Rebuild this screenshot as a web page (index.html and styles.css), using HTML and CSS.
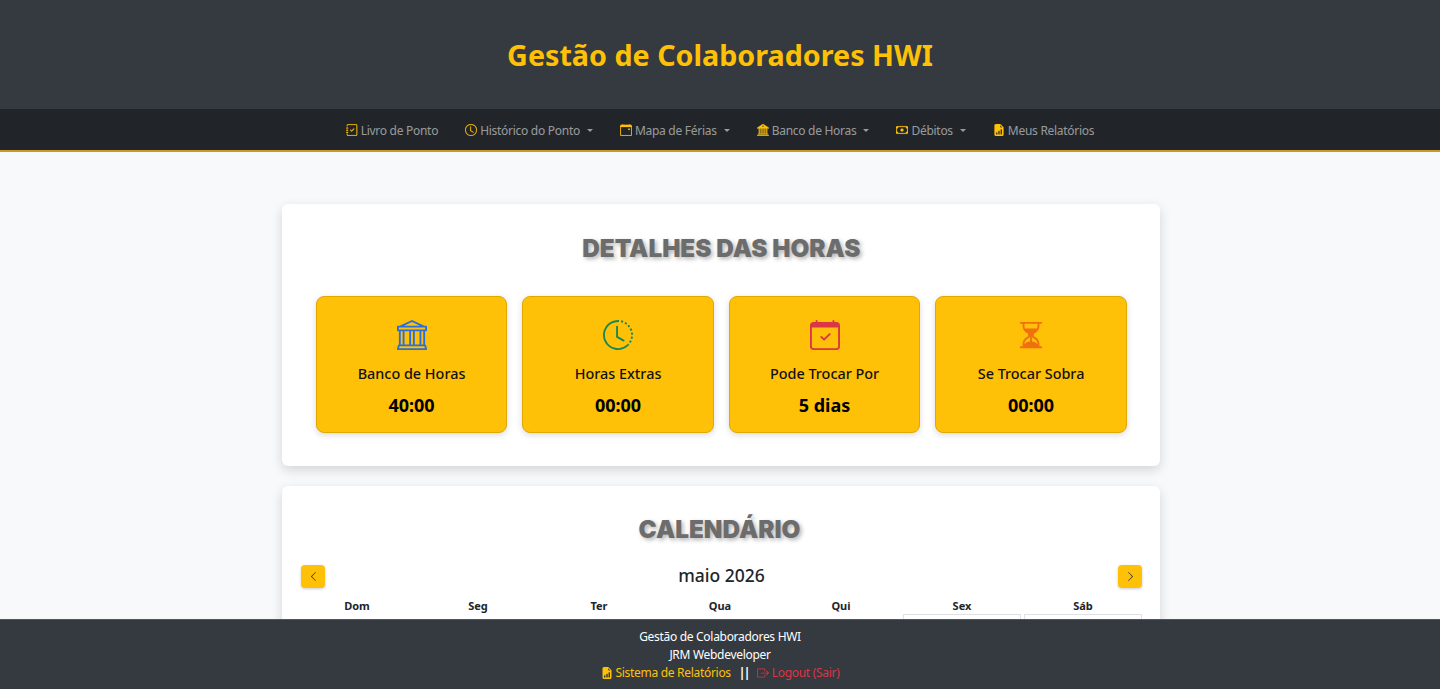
FILE: index.html
```html
<!DOCTYPE html>
<html lang="pt">
<head>
    <meta charset="UTF-8">
    <meta name="viewport" content="width=device-width, initial-scale=1.0">
    <title>Gestão de Colaboradores HWI</title>
    <link rel="stylesheet" href="styles.css">
</head>
<body>
    <svg class="icon-defs" aria-hidden="true">
        <symbol id="i-journal" viewBox="0 0 16 16"><path fill-rule="evenodd" d="M10.854 6.146a.5.5 0 0 1 0 .708l-3 3a.5.5 0 0 1-.708 0l-1.5-1.5a.5.5 0 1 1 .708-.708L7.5 8.793l2.646-2.647a.5.5 0 0 1 .708 0z"/><path d="M3 0h10a2 2 0 0 1 2 2v12a2 2 0 0 1-2 2H3a2 2 0 0 1-2-2v-1h1v1a1 1 0 0 0 1 1h10a1 1 0 0 0 1-1V2a1 1 0 0 0-1-1H3a1 1 0 0 0-1 1v1H1V2a2 2 0 0 1 2-2z"/><path d="M1 5v-.5a.5.5 0 0 1 1 0V5h.5a.5.5 0 0 1 0 1h-2a.5.5 0 0 1 0-1H1zm0 3v-.5a.5.5 0 0 1 1 0V8h.5a.5.5 0 0 1 0 1h-2a.5.5 0 0 1 0-1H1zm0 3v-.5a.5.5 0 0 1 1 0v.5h.5a.5.5 0 0 1 0 1h-2a.5.5 0 0 1 0-1H1z"/></symbol>
        <symbol id="i-clock" viewBox="0 0 16 16"><path d="M8 3.5a.5.5 0 0 0-1 0V9a.5.5 0 0 0 .252.434l3.5 2a.5.5 0 0 0 .496-.868L8 8.71V3.5z"/><path d="M8 16A8 8 0 1 0 8 0a8 8 0 0 0 0 16zm7-8A7 7 0 1 1 1 8a7 7 0 0 1 14 0z"/></symbol>
        <symbol id="i-clock-history" viewBox="0 0 16 16"><path d="M8.515 1.019A7 7 0 0 0 8 1V0a8 8 0 0 1 .589.022l-.074.997zm2.004.45a7.003 7.003 0 0 0-.985-.299l.219-.976c.383.086.76.2 1.126.342l-.36.933zm1.37.71a7.01 7.01 0 0 0-.439-.27l.493-.87a8.025 8.025 0 0 1 .979.654l-.615.789a6.996 6.996 0 0 0-.418-.302zm1.834 1.79a6.99 6.99 0 0 0-.653-.796l.724-.69c.27.285.52.59.747.91l-.818.576zm.744 1.352a7.08 7.08 0 0 0-.214-.468l.893-.45a7.976 7.976 0 0 1 .45 1.088l-.95.313a7.023 7.023 0 0 0-.179-.483zm.53 2.507a6.991 6.991 0 0 0-.1-1.025l.985-.17c.067.386.106.778.116 1.17l-1 .025zm-.131 1.538c.033-.17.06-.339.081-.51l.993.123a7.957 7.957 0 0 1-.23 1.155l-.964-.267c.046-.165.086-.332.12-.501zm-.952 2.379c.184-.29.346-.594.486-.908l.914.405c-.16.36-.345.706-.555 1.038l-.845-.535zm-.964 1.205c.122-.122.239-.248.35-.378l.758.653a8.073 8.073 0 0 1-.401.432l-.707-.707z"/><path d="M8 1a7 7 0 1 0 4.95 11.95l.707.707A8.001 8.001 0 1 1 8 0v1z"/><path d="M7.5 3a.5.5 0 0 1 .5.5v5.21l3.248 1.856a.5.5 0 0 1-.496.868l-3.5-2A.5.5 0 0 1 7 9V3.5a.5.5 0 0 1 .5-.5z"/></symbol>
        <symbol id="i-calendar-event" viewBox="0 0 16 16"><path d="M11 6.5a.5.5 0 0 1 .5-.5h1a.5.5 0 0 1 .5.5v1a.5.5 0 0 1-.5.5h-1a.5.5 0 0 1-.5-.5v-1z"/><path d="M3.5 0a.5.5 0 0 1 .5.5V1h8V.5a.5.5 0 0 1 1 0V1h1a2 2 0 0 1 2 2v11a2 2 0 0 1-2 2H2a2 2 0 0 1-2-2V3a2 2 0 0 1 2-2h1V.5a.5.5 0 0 1 .5-.5zM1 4v10a1 1 0 0 0 1 1h12a1 1 0 0 0 1-1V4H1z"/></symbol>
        <symbol id="i-calendar-check" viewBox="0 0 16 16"><path d="M10.854 7.146a.5.5 0 0 1 0 .708l-3 3a.5.5 0 0 1-.708 0l-1.5-1.5a.5.5 0 1 1 .708-.708L7.5 9.793l2.646-2.647a.5.5 0 0 1 .708 0z"/><path d="M3.5 0a.5.5 0 0 1 .5.5V1h8V.5a.5.5 0 0 1 1 0V1h1a2 2 0 0 1 2 2v11a2 2 0 0 1-2 2H2a2 2 0 0 1-2-2V3a2 2 0 0 1 2-2h1V.5a.5.5 0 0 1 .5-.5zM1 4v10a1 1 0 0 0 1 1h12a1 1 0 0 0 1-1V4H1z"/></symbol>
        <symbol id="i-bank2" viewBox="0 0 16 16"><path d="M8.277.084a.5.5 0 0 0-.554 0l-7.5 5A.5.5 0 0 0 .5 6h1.875v7H1.5a.5.5 0 0 0 0 1h13a.5.5 0 1 0 0-1h-.875V6H15.5a.5.5 0 0 0 .277-.916l-7.5-5zM12.375 6v7h-1.25V6h1.25zm-2.5 0v7h-1.25V6h1.25zm-2.5 0v7h-1.25V6h1.25zm-2.5 0v7h-1.25V6h1.25zM8 4a1 1 0 1 1 0-2 1 1 0 0 1 0 2zM.5 15a.5.5 0 0 0 0 1h15a.5.5 0 1 0 0-1H.5z"/></symbol>
        <symbol id="i-bank" viewBox="0 0 16 16"><path d="m8 0 6.61 3h.89a.5.5 0 0 1 .5.5v2a.5.5 0 0 1-.5.5H15v7a.5.5 0 0 1 .485.38l.5 2a.498.498 0 0 1-.485.62H.5a.498.498 0 0 1-.485-.62l.5-2A.501.501 0 0 1 1 13V6H.5a.5.5 0 0 1-.5-.5v-2A.5.5 0 0 1 .5 3h.89L8 0ZM3.777 3h8.447L8 1 3.777 3ZM2 6v7h1V6H2Zm2 0v7h2.5V6H4Zm3.5 0v7h1V6h-1Zm2 0v7H12V6H9.5ZM13 6v7h1V6h-1Zm2-1V4H1v1h14Zm-.39 9H1.39l-.25 1h13.72l-.25-1Z"/></symbol>
        <symbol id="i-cash" viewBox="0 0 16 16"><path d="M8 10a2 2 0 1 0 0-4 2 2 0 0 0 0 4z"/><path d="M0 4a1 1 0 0 1 1-1h14a1 1 0 0 1 1 1v8a1 1 0 0 1-1 1H1a1 1 0 0 1-1-1V4zm3 0a2 2 0 0 1-2 2v4a2 2 0 0 1 2 2h10a2 2 0 0 1 2-2V6a2 2 0 0 1-2-2H3z"/></symbol>
        <symbol id="i-report" viewBox="0 0 16 16"><path d="M9.293 0H4a2 2 0 0 0-2 2v12a2 2 0 0 0 2 2h8a2 2 0 0 0 2-2V4.707A1 1 0 0 0 13.707 4L10 .293A1 1 0 0 0 9.293 0zM9.5 3.5v-2l3 3h-2a1 1 0 0 1-1-1zm.5 10v-6a.5.5 0 0 1 .5-.5h1a.5.5 0 0 1 .5.5v6a.5.5 0 0 1-.5.5h-1a.5.5 0 0 1-.5-.5zm-2.5.5a.5.5 0 0 1-.5-.5v-4a.5.5 0 0 1 .5-.5h1a.5.5 0 0 1 .5.5v4a.5.5 0 0 1-.5.5h-1zm-3 0a.5.5 0 0 1-.5-.5v-2a.5.5 0 0 1 .5-.5h1a.5.5 0 0 1 .5.5v2a.5.5 0 0 1-.5.5h-1z"/></symbol>
        <symbol id="i-hourglass" viewBox="0 0 16 16"><path d="M2.5 15a.5.5 0 1 1 0-1h1v-1a4.5 4.5 0 0 1 2.557-4.06c.29-.139.443-.377.443-.59v-.7c0-.213-.154-.451-.443-.59A4.5 4.5 0 0 1 3.5 3V2h-1a.5.5 0 0 1 0-1h11a.5.5 0 0 1 0 1h-1v1a4.5 4.5 0 0 1-2.557 4.06c-.29.139-.443.377-.443.59v.7c0 .213.154.451.443.59A4.5 4.5 0 0 1 12.5 13v1h1a.5.5 0 0 1 0 1h-11zm2-13v1c0 .537.12 1.045.337 1.5h6.326c.216-.455.337-.963.337-1.5V2h-7zm3 6.35c0 .701-.478 1.236-1.011 1.492A3.5 3.5 0 0 0 4.5 13s.866-1.299 3-1.48V8.35zm1 0v3.17c2.134.181 3 1.48 3 1.48a3.5 3.5 0 0 0-1.989-3.158C8.978 9.586 8.5 9.052 8.5 8.351z"/></symbol>
        <symbol id="i-logout" viewBox="0 0 16 16"><path fill-rule="evenodd" d="M10 12.5a.5.5 0 0 1-.5.5h-8a.5.5 0 0 1-.5-.5v-9a.5.5 0 0 1 .5-.5h8a.5.5 0 0 1 .5.5v2a.5.5 0 0 0 1 0v-2A1.5 1.5 0 0 0 9.5 2h-8A1.5 1.5 0 0 0 0 3.5v9A1.5 1.5 0 0 0 1.5 14h8a1.5 1.5 0 0 0 1.5-1.5v-2a.5.5 0 0 0-1 0v2z"/><path fill-rule="evenodd" d="M15.854 8.354a.5.5 0 0 0 0-.708l-3-3a.5.5 0 0 0-.708.708L14.293 7.5H5.5a.5.5 0 0 0 0 1h8.793l-2.147 2.146a.5.5 0 0 0 .708.708l3-3z"/></symbol>
        <symbol id="i-left" viewBox="0 0 16 16"><path fill-rule="evenodd" d="M11.354 1.646a.5.5 0 0 1 0 .708L5.707 8l5.647 5.646a.5.5 0 0 1-.708.708l-6-6a.5.5 0 0 1 0-.708l6-6a.5.5 0 0 1 .708 0z"/></symbol>
        <symbol id="i-right" viewBox="0 0 16 16"><path fill-rule="evenodd" d="M4.646 1.646a.5.5 0 0 1 .708 0l6 6a.5.5 0 0 1 0 .708l-6 6a.5.5 0 0 1-.708-.708L10.293 8 4.646 2.354a.5.5 0 0 1 0-.708z"/></symbol>
    </svg>

    <header class="site-header">
        <h1>Gestão de Colaboradores HWI</h1>
    </header>

    <nav class="main-nav">
        <a href="#"><svg class="nav-icon"><use href="#i-journal"/></svg>Livro de Ponto</a>
        <a href="#" class="has-caret"><svg class="nav-icon"><use href="#i-clock"/></svg>Histórico do Ponto</a>
        <a href="#" class="has-caret"><svg class="nav-icon"><use href="#i-calendar-event"/></svg>Mapa de Férias</a>
        <a href="#" class="has-caret"><svg class="nav-icon"><use href="#i-bank2"/></svg>Banco de Horas</a>
        <a href="#" class="has-caret"><svg class="nav-icon"><use href="#i-cash"/></svg>Débitos</a>
        <a href="#"><svg class="nav-icon"><use href="#i-report"/></svg>Meus Relatórios</a>
    </nav>

    <main class="content">
        <section class="panel panel-hours">
            <h2 class="panel-title">DETALHES DAS HORAS</h2>
            <div class="stat-grid">
                <div class="stat-card">
                    <svg class="stat-icon blue"><use href="#i-bank"/></svg>
                    <h3>Banco de Horas</h3>
                    <p>40:00</p>
                </div>
                <div class="stat-card">
                    <svg class="stat-icon green"><use href="#i-clock-history"/></svg>
                    <h3>Horas Extras</h3>
                    <p>00:00</p>
                </div>
                <div class="stat-card">
                    <svg class="stat-icon red"><use href="#i-calendar-check"/></svg>
                    <h3>Pode Trocar Por</h3>
                    <p>5 dias</p>
                </div>
                <div class="stat-card">
                    <svg class="stat-icon orange"><use href="#i-hourglass"/></svg>
                    <h3>Se Trocar Sobra</h3>
                    <p>00:00</p>
                </div>
            </div>
        </section>

        <section class="panel panel-calendar">
            <h2 class="panel-title">CALENDÁRIO</h2>
            <div class="cal-head">
                <button class="cal-btn"><svg><use href="#i-left"/></svg></button>
                <span class="cal-month">maio 2026</span>
                <button class="cal-btn"><svg><use href="#i-right"/></svg></button>
            </div>
            <div class="cal-grid">
                <div class="cal-day-name">Dom</div>
                <div class="cal-day-name">Seg</div>
                <div class="cal-day-name">Ter</div>
                <div class="cal-day-name">Qua</div>
                <div class="cal-day-name">Qui</div>
                <div class="cal-day-name">Sex</div>
                <div class="cal-day-name">Sáb</div>
                <div class="cal-empty"></div>
                <div class="cal-empty"></div>
                <div class="cal-empty"></div>
                <div class="cal-empty"></div>
                <div class="cal-empty"></div>
                <div class="cal-cell"></div>
                <div class="cal-cell"></div>
            </div>
        </section>
    </main>

    <footer class="site-footer">
        <div>Gestão de Colaboradores HWI</div>
        <div>JRM Webdeveloper</div>
        <div class="footer-links">
            <a href="#" class="link-yellow"><svg class="foot-icon"><use href="#i-report"/></svg>Sistema de Relatórios</a>
            <span class="sep">||</span>
            <a href="#" class="link-red"><svg class="foot-icon"><use href="#i-logout"/></svg>Logout (Sair)</a>
        </div>
    </footer>
</body>
</html>
```

FILE: styles.css
```css
html, body {
    height: 100%;
    overflow: hidden;
}

body {
    margin: 0;
    font-family: "Noto Sans", "Open Sans", Arial, sans-serif;
    background-color: #f8f9fa;
    color: #212529;
}

.icon-defs {
    display: none;
}

.site-header {
    height: 109px;
    display: flex;
    align-items: center;
    justify-content: center;
    background-color: #343a40;
}

.site-header h1 {
    margin: 0;
    font-size: 28.7px;
    font-weight: 700;
    color: #ffc107;
}

.main-nav {
    height: 40px;
    padding-top: 1px;
    display: flex;
    align-items: center;
    justify-content: center;
    background-color: #212529;
    border-bottom: 2px solid #c9992b;
}

.main-nav a {
    display: flex;
    align-items: center;
    padding: 0 13.5px;
    font-size: 12px;
    letter-spacing: -0.28px;
    color: rgba(255, 255, 255, 0.55);
    text-decoration: none;
}

.nav-icon {
    width: 12px;
    height: 12px;
    margin-right: 3px;
    fill: #ffc107;
    stroke: #ffc107;
    stroke-width: 0.3;
}

.has-caret::after {
    content: "";
    margin-left: 7px;
    border-top: 3.5px solid;
    border-left: 3.5px solid transparent;
    border-right: 3.5px solid transparent;
}

.content {
    width: 878px;
    margin: 52px 0 0 282px;
}

.panel {
    background-color: #fff;
    border-radius: 6px;
    box-shadow: 0 4px 12px rgba(0, 0, 0, 0.15);
    margin-bottom: 20px;
}

.panel-hours {
    height: 262px;
    padding: 27px 33.2px 0 33.8px;
    box-sizing: border-box;
}

.panel-calendar {
    padding: 26px 19px 0 16px;
}

.panel-title {
    margin: 0;
    font-family: Inter, "Noto Sans", sans-serif;
    font-size: 24.3px;
    line-height: 34px;
    font-weight: 900;
    text-align: center;
    color: #6c6c6c;
    text-shadow: 2px 2px 4px rgba(0, 0, 0, 0.3);
}

.stat-grid {
    display: grid;
    grid-template-columns: repeat(4, 1fr);
    gap: 15px;
    margin-top: 31px;
}

.stat-card {
    height: 137px;
    box-sizing: border-box;
    padding-top: 23px;
    text-align: center;
    background-color: #ffc107;
    border: 1px solid #e0a800;
    border-radius: 8px;
    box-shadow: 0 2px 6px rgba(0, 0, 0, 0.15);
}

.stat-icon {
    display: block;
    width: 30px;
    height: 30px;
    margin: 0 auto;
}

.stat-icon.blue { fill: #2b6fdc; }
.stat-icon.green { fill: #198754; }
.stat-icon.red { fill: #dc3545; }
.stat-icon.orange { fill: #f0700f; }

.stat-card h3 {
    margin: 13px 0 0;
    font-size: 14.4px;
    line-height: 22px;
    font-weight: 500;
    color: #111;
}

.stat-card p {
    margin: 7px 0 0;
    font-size: 18px;
    line-height: 26px;
    font-weight: 700;
    color: #000;
}

.cal-head {
    display: flex;
    align-items: center;
    justify-content: space-between;
    height: 23px;
    margin-top: 19px;
    padding: 0 0 0 3px;
    width: 844px;
    box-sizing: border-box;
}

.cal-month {
    padding-bottom: 4px;
    font-size: 17.5px;
    font-weight: 500;
    color: #212529;
}

.cal-btn {
    width: 24px;
    height: 23px;
    padding: 0;
    border: none;
    border-radius: 4px;
    background-color: #ffc107;
    box-shadow: 0 1px 3px rgba(0, 0, 0, 0.2);
    display: flex;
    align-items: center;
    justify-content: center;
}

.cal-btn svg {
    width: 11px;
    height: 11px;
    fill: #212529;
}

.cal-grid {
    display: grid;
    grid-template-columns: repeat(7, 118px);
    gap: 0 3px;
    margin-top: 10px;
}

.cal-day-name {
    font-size: 11px;
    line-height: 15px;
    font-weight: 700;
    text-align: center;
    color: #212529;
}

.cal-cell {
    margin-top: 1px;
    height: 80px;
    border: 1px solid #dee2e6;
    background-color: #fff;
}

.site-footer {
    position: fixed;
    left: 0;
    right: 0;
    bottom: 0;
    height: 70px;
    box-sizing: border-box;
    padding-top: 8px;
    background-color: #343a40;
    border-top: 1px solid #555;
    font-size: 12px;
    letter-spacing: -0.3px;
    line-height: 18px;
    text-align: center;
    color: #fff;
}

.footer-links a {
    text-decoration: none;
}

.link-yellow { color: #ffc107; }
.link-red { color: #dc3545; }

.foot-icon {
    width: 12px;
    height: 12px;
    margin-right: 3px;
    vertical-align: -2px;
    fill: currentColor;
}

.sep {
    margin: 0 5px;
    font-weight: 700;
    letter-spacing: -1.5px;
}
```
